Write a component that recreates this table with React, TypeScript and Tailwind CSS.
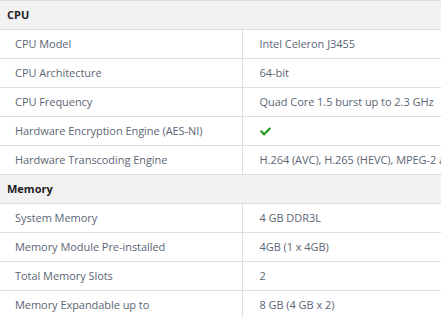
import { Fragment } from "react";
import { FaCheck } from "react-icons/fa";

type Row = { label: string; value: React.ReactNode };

const sections: { title: string; rows: Row[] }[] = [
  {
    title: "CPU",
    rows: [
      { label: "CPU Model", value: "Intel Celeron J3455" },
      { label: "CPU Architecture", value: "64-bit" },
      { label: "CPU Frequency", value: "Quad Core 1.5 burst up to 2.3 GHz" },
      {
        label: "Hardware Encryption Engine (AES-NI)",
        value: <FaCheck className="text-[#1f9a1f] w-[11px] h-[11px]" />,
      },
      {
        label: "Hardware Transcoding Engine",
        value: "H.264 (AVC), H.265 (HEVC), MPEG-2 and VC-1",
      },
    ],
  },
  {
    title: "Memory",
    rows: [
      { label: "System Memory", value: "4 GB DDR3L" },
      { label: "Memory Module Pre-installed", value: "4GB (1 x 4GB)" },
      { label: "Total Memory Slots", value: "2" },
      { label: "Memory Expandable up to", value: "8 GB (4 GB x 2)" },
    ],
  },
];

export default function App() {
  return (
    <div className="w-[441px] h-[317px] overflow-hidden bg-white font-['Open_Sans',sans-serif] text-[11px]">
      <table className="w-[560px] border-collapse whitespace-nowrap">
        <tbody>
          {sections.map((section) => (
            <Fragment key={section.title}>
              <tr className="h-[29px] bg-[#f2f2f2] border-y border-[#dedede]">
                <th colSpan={2} className="pl-[7px] text-left font-bold text-[#1c1c1c]">
                  {section.title}
                </th>
              </tr>
              {section.rows.map((row) => (
                <tr key={row.label} className="h-[29px] border-y border-[#dedede] text-[#5b6674] tracking-[-0.05px]">
                  <td className="w-[242px] pl-[15px] border-r border-[#dedede]">{row.label}</td>
                  <td className="pl-[17px]">{row.value}</td>
                </tr>
              ))}
            </Fragment>
          ))}
        </tbody>
      </table>
    </div>
  );
}
